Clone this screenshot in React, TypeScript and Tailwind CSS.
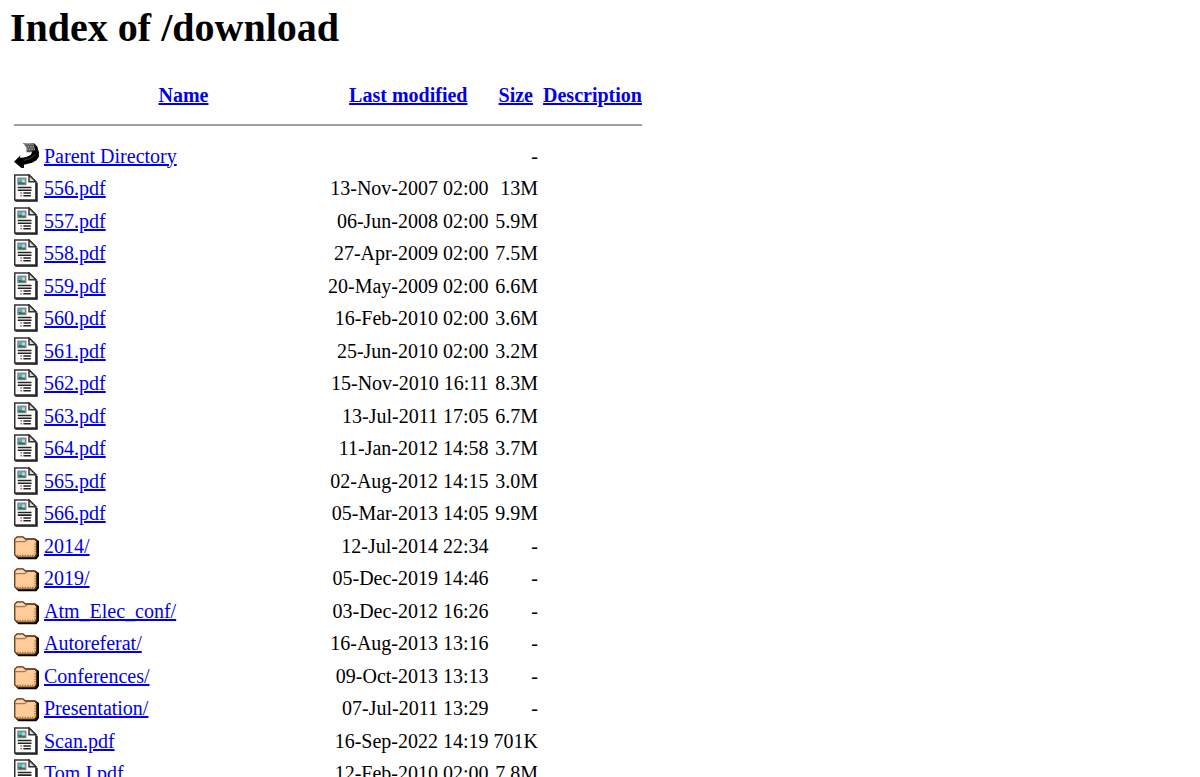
type IconKind = 'back' | 'doc' | 'folder';

interface Entry {
  name: string;
  modified: string;
  size: string;
  icon: IconKind;
}

const entries: Entry[] = [
  { name: 'Parent Directory', modified: '', size: '-', icon: 'back' },
  { name: '556.pdf', modified: '13-Nov-2007 02:00', size: '13M', icon: 'doc' },
  { name: '557.pdf', modified: '06-Jun-2008 02:00', size: '5.9M', icon: 'doc' },
  { name: '558.pdf', modified: '27-Apr-2009 02:00', size: '7.5M', icon: 'doc' },
  { name: '559.pdf', modified: '20-May-2009 02:00', size: '6.6M', icon: 'doc' },
  { name: '560.pdf', modified: '16-Feb-2010 02:00', size: '3.6M', icon: 'doc' },
  { name: '561.pdf', modified: '25-Jun-2010 02:00', size: '3.2M', icon: 'doc' },
  { name: '562.pdf', modified: '15-Nov-2010 16:11', size: '8.3M', icon: 'doc' },
  { name: '563.pdf', modified: '13-Jul-2011 17:05', size: '6.7M', icon: 'doc' },
  { name: '564.pdf', modified: '11-Jan-2012 14:58', size: '3.7M', icon: 'doc' },
  { name: '565.pdf', modified: '02-Aug-2012 14:15', size: '3.0M', icon: 'doc' },
  { name: '566.pdf', modified: '05-Mar-2013 14:05', size: '9.9M', icon: 'doc' },
  { name: '2014/', modified: '12-Jul-2014 22:34', size: '-', icon: 'folder' },
  { name: '2019/', modified: '05-Dec-2019 14:46', size: '-', icon: 'folder' },
  { name: 'Atm_Elec_conf/', modified: '03-Dec-2012 16:26', size: '-', icon: 'folder' },
  { name: 'Autoreferat/', modified: '16-Aug-2013 13:16', size: '-', icon: 'folder' },
  { name: 'Conferences/', modified: '09-Oct-2013 13:13', size: '-', icon: 'folder' },
  { name: 'Presentation/', modified: '07-Jul-2011 13:29', size: '-', icon: 'folder' },
  { name: 'Scan.pdf', modified: '16-Sep-2022 14:19', size: '701K', icon: 'doc' },
  { name: 'Tom I.pdf', modified: '12-Feb-2010 02:00', size: '7.8M', icon: 'doc' },
];

function BackIcon() {
  return (
    <svg viewBox="0 0 20 22" className="block h-7 w-[25px]" aria-hidden="true">
      {/* hatched tail of the arrow */}
      <path d="M7 .5l4 .5 5-.5 3 3.500-1 4H10V4z" fill="#555" />
      <path d="M8 1.500h8M9 3.500h8M10 5.500h7" stroke="#aaa" strokeDasharray="1 1" fill="none" />
      {/* curved body and head */}
      <path d="M16 1l2.500 2.500L20 8v3.500l-2 2.800-3.500 2L8 18v2.500H6L0 15.500l5-5V12.500l5-.8 3.500-1.700L15 6.500h2z" fill="#000" />
      <path d="M8 14.500l5-1.500 4-3" stroke="#333" fill="none" />
    </svg>
  );
}

function DocIcon() {
  return (
    <svg viewBox="0 0 20 22" className="block h-7 w-[25px]" aria-hidden="true">
      <path d="M1 21.200h17.200V7" stroke="#111" strokeWidth="1.500" fill="none" />
      <path d="M.6.600h11.400L17.500 6v14.500H.6z" fill="#fff" stroke="#333" strokeWidth="1.200" />
      <path d="M12 .6V6h5.500z" fill="#ddd" stroke="#333" strokeWidth="1.200" />
      <path d="M2.600 2.600h7.400v6.200H2.600z" fill="#888" />
      <path d="M3.600 3.600h5.400v4.200H3.600z" fill="#49b0e6" />
      <path d="M3.600 6.200h2l1 .8h2.400v1H3.600z" fill="#476b35" />
      <path d="M6.600 4.200h2v2h-2z" fill="#eadf75" />
      <path d="M3 10.500h11M3 12.700h11M7.500 14.900h6M7.500 17.100h6" stroke="#222" strokeWidth="1.200" fill="none" />
      <path d="M5 14.300h1.500v1.200H5zM5 16.500h1.500v1.200H5z" fill="#cc6666" />
    </svg>
  );
}

function FolderIcon() {
  return (
    <svg viewBox="0 0 20 22" className="block h-7 w-[25px]" aria-hidden="true">
      <path d="M2 5h15l3 2v12l-2 2.500H3.500l-2-2z" fill="#000" />
      <path d="M.6 5.500L2.500 3.600h4.700L9.300 5.500h7.200L18 7v11l-1.500 1.800H2.500L.6 18z" fill="#ffcc99" stroke="#553311" />
      <path d="M1 7.500h7.500l2-1.500" stroke="#aa7755" fill="none" />
      <path d="M2 6h5" stroke="#ffddbb" fill="none" />
      <path d="M2.500 18.500h14M16.800 9v9" stroke="#996633" strokeDasharray="1 1" fill="none" />
    </svg>
  );
}

const icons = { back: BackIcon, doc: DocIcon, folder: FolderIcon };

const linkClass = 'text-[#0000ee] underline';

export default function App() {
  return (
    <main className="min-h-screen bg-white px-[10px] pt-1 font-['Liberation_Serif',serif] text-xl leading-6 text-black">
      <h1 className="text-[40px] leading-12 font-bold">Index of /download</h1>
      <table className="mt-5 ml-1 table-fixed border-collapse">
        <colgroup>
          <col className="w-[30px]" />
          <col className="w-[284px]" />
          <col className="w-[165px]" />
          <col className="w-[49px]" />
          <col className="w-[99px]" />
        </colgroup>
        <thead>
          <tr className="h-[46px]">
            <th></th>
            <th className="pr-[5px]"><a href="#name" className={linkClass}>Name</a></th>
            <th className="pr-[5px]"><a href="#modified" className={linkClass}>Last modified</a></th>
            <th className="pr-[5px]"><a href="#size" className={linkClass}>Size</a></th>
            <th><a href="#description" className={linkClass}>Description</a></th>
          </tr>
          <tr>
            <th colSpan={5} className="pt-[6px] pb-[13px]">
              <hr className="border-t-2 border-[#a0a0a0]" />
            </th>
          </tr>
        </thead>
        <tbody>
          {entries.map((entry) => {
            const Icon = icons[entry.icon];
            return (
              <tr key={entry.name} className="odd:h-[33px] even:h-8">
                <td className="align-middle"><Icon /></td>
                <td className="pr-[5px]"><a href={`#${entry.name}`} className={linkClass}>{entry.name}</a></td>
                <td className="pr-[5px] text-right whitespace-nowrap">{entry.modified}</td>
                <td className="pr-[5px] text-right">{entry.size}</td>
                <td></td>
              </tr>
            );
          })}
        </tbody>
      </table>
    </main>
  );
}
